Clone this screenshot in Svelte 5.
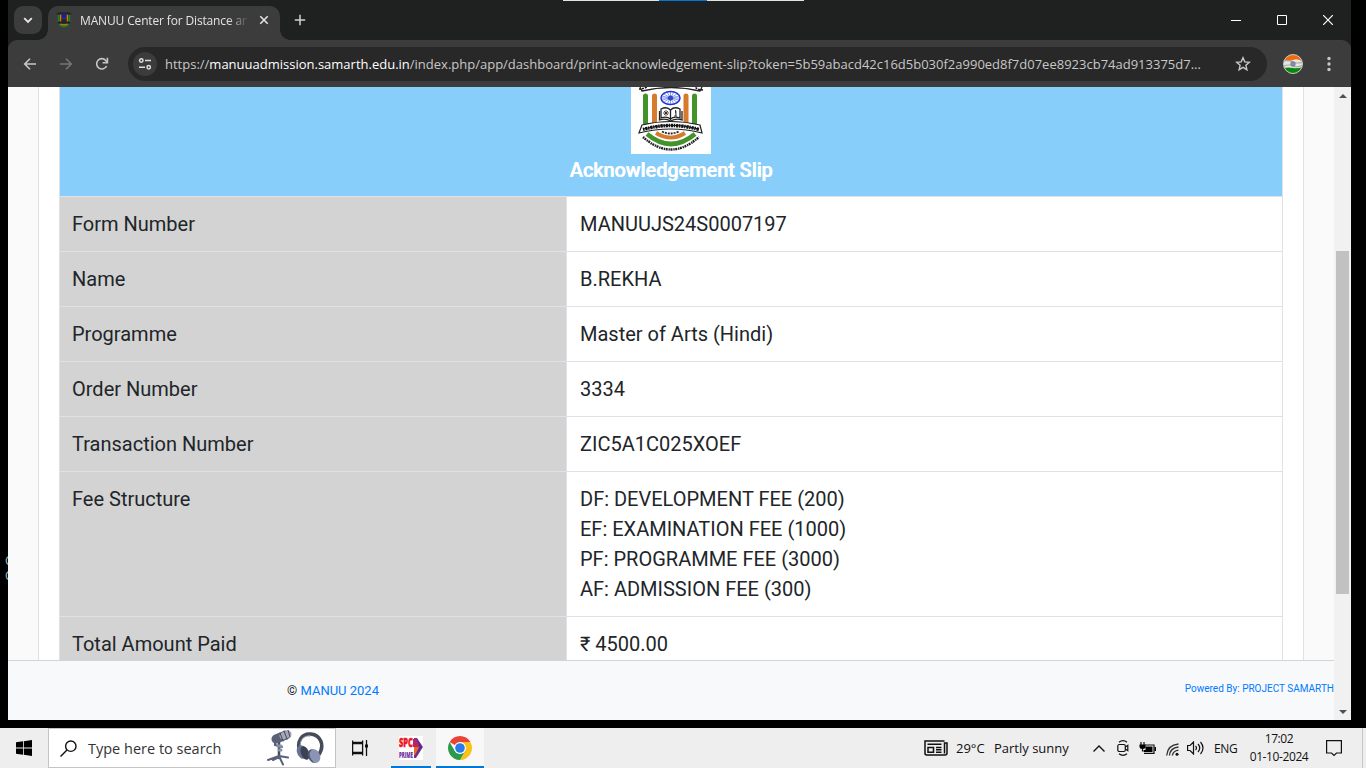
<script>
  const rows = [
    ['Form Number', ['MANUUJS24S0007197']],
    ['Name', ['B.REKHA']],
    ['Programme', ['Master of Arts (Hindi)']],
    ['Order Number', ['3334']],
    ['Transaction Number', ['ZIC5A1C025XOEF']],
    ['Fee Structure', [
      'DF: DEVELOPMENT FEE (200)',
      'EF: EXAMINATION FEE (1000)',
      'PF: PROGRAMME FEE (3000)',
      'AF: ADMISSION FEE (300)'
    ]],
    ['Total Amount Paid', ['₹ 4500.00']]
  ];
</script>

<div class="screen">
  <div class="behind"><span>C</span><span>C</span></div>
  <div class="window">
    <div class="topline"><i></i></div>
    <div class="tabs">
      <div class="tabmenu">
        <svg width="12" height="12" viewBox="0 0 12 12"><path d="M2.2 4.2 6 8l3.8-3.8" fill="none" stroke="#e8e8e8" stroke-width="1.8" /></svg>
      </div>
      <div class="tab">
        <svg class="fav" width="16" height="16" viewBox="0 0 16 16">
          <path d="M1 2q7-2.500 14 0" fill="none" stroke="#272727" stroke-width="2" />
          <path d="M2.500 3v7M13.500 3v7" stroke="#128a12" stroke-width="1.500" />
          <path d="M4.500 3v7M11.500 3v7" stroke="#d8761c" stroke-width="1.300" />
          <path d="M6 2h4v4H6z" fill="#1b1ba8" /><path d="M5.500 7h5v3h-5z" fill="#292929" />
          <path d="M2 10.500h12" stroke="#222" stroke-width="2" />
          <path d="M4.500 12q3.500 2 7 0" fill="none" stroke="#e27b22" stroke-width="1.400" />
          <path d="M3 12.500q5 4 10 0" fill="none" stroke="#138a18" stroke-width="1.600" />
        </svg>
        <span class="title">MANUU Center for Distance and Online</span>
        <svg class="x" width="10" height="10" viewBox="0 0 10 10"><path d="m1.300 1.300 7.400 7.400m0-7.400L1.300 8.700" stroke="#e3e3e3" stroke-width="1.600" /></svg>
      </div>
      <svg class="plus" width="12" height="12" viewBox="0 0 12 12"><path d="M6 .8v10.400M.8 6h10.400" stroke="#d0d0d0" stroke-width="1.500" /></svg>
      <div class="controls">
        <svg width="10" height="10" viewBox="0 0 10 10"><path d="M0 5.500h10" stroke="#fff" /></svg>
        <svg width="10" height="10" viewBox="0 0 10 10"><path d="M.5.5h9v9h-9z" fill="none" stroke="#fff" /></svg>
        <svg width="10" height="10" viewBox="0 0 10 10"><path d="m0 0 10 10M10 0 0 10" stroke="#fff" stroke-width="1.200" /></svg>
      </div>
    </div>

    <div class="toolbar">
      <svg class="nav" width="16" height="16" viewBox="0 0 16 16"><path d="M14 8H3M8 2.700 2.700 8 8 13.300" fill="none" stroke="#c7c7c7" stroke-width="1.600" /></svg>
      <svg class="nav" width="16" height="16" viewBox="0 0 16 16"><path d="M2 8h11M8 2.700 13.300 8 8 13.300" fill="none" stroke="#757575" stroke-width="1.600" /></svg>
      <svg class="nav" width="16" height="16" viewBox="0 0 16 16"><path d="M12.600 10A5.200 5.200 0 1 1 12 4.700L13 6" fill="none" stroke="#c7c7c7" stroke-width="1.600" /><path d="M13.400 1.800v4.900H8.600" fill="none" stroke="#c7c7c7" stroke-width="1.600" /></svg>
      <div class="omni">
        <div class="site">
          <svg width="14" height="14" viewBox="0 0 14 14" fill="none" stroke="#dedede" stroke-width="1.500"><circle cx="3.300" cy="3.500" r="1.700" /><path d="M7 3.500h6M1 10.300h6" /><circle cx="10.700" cy="10.300" r="1.700" /></svg>
        </div>
        <div class="url"><span class="scheme">https://</span><b>manuuadmission.samarth.edu.in</b><span class="path">/index.php/app/dashboard/print-acknowledgement-slip?token=5b59abacd42c16d5b030f2a990ed8f7d07ee8923cb74ad913375d7...</span></div>
        <svg class="star" width="16" height="16" viewBox="0 0 16 16"><path d="m8 1.800 1.800 4.100 4.500.4-3.400 3 1 4.400L8 11.400l-3.900 2.300 1-4.400-3.400-3 4.500-.4z" fill="none" stroke="#c7c7c7" stroke-width="1.400" /></svg>
      </div>
      <svg class="avatar" width="20" height="20" viewBox="0 0 20 20">
        <defs><clipPath id="flagclip"><circle cx="10" cy="10" r="9.300" /></clipPath></defs>
        <g clip-path="url(#flagclip)">
          <path d="M0 0h20v20H0z" fill="#e5e5e2" /><path d="M0 0h20v8Q15 4 10 6T0 6z" fill="#f26a0b" />
          <path d="M0 14q6-1 10 0t10-1v7H0z" fill="#07870c" />
          <path d="M0 7q6-1 10 1t10 0M1 12q5-2 9 0t10-1" fill="none" stroke="#a9a9a4" stroke-width="1.200" />
          <circle cx="10" cy="10" r="2.300" fill="#8b90b2" stroke="#59618f" stroke-width=".6" />
        </g><circle cx="10" cy="10" r="9.500" fill="none" stroke="#c7c7c7" />
      </svg>
      <svg class="kebab" width="4" height="16" viewBox="0 0 4 16" fill="#c7c7c7"><circle cx="2" cy="2.500" r="1.700" /><circle cx="2" cy="8" r="1.700" /><circle cx="2" cy="13.500" r="1.700" /></svg>
    </div>

    <div class="viewport">
      <div class="page">
        <div class="content">
          <div class="card">
            <div class="sheet">
              <div class="banner">
                <svg width="80" height="67" viewBox="0 0 80 67">
                  <path d="M0 0h80v67H0z" fill="#fff" />
                  <path d="M9 0l2 4Q40-3 69 4l2-4" fill="none" stroke="#222" stroke-width="1.300" />
                  <path d="M8 2q4 0 8-2M72 3q-5 0-8-3" fill="none" stroke="#111" stroke-width="1.500" stroke-dasharray="2 1" />
                  <path d="M14.500 9v27M63.500 9v27" stroke="#429329" stroke-width="5" stroke-linecap="round" />
                  <path d="M23.500 9v26M55 9v26" stroke="#d67a2d" stroke-width="5" stroke-linecap="round" />
                  <ellipse cx="39.500" cy="11" rx="9.500" ry="6.500" fill="#fff" stroke="#1a32d8" stroke-width="1.500" />
                  <path d="M30.500 11h18M39.500 5v12M33 7l13 8M46 7l-13 8M36 5l7 12M43 5l-7 12M31 9l17 4M48 9l-17 4" stroke="#3c57e4" stroke-width=".6" />
                  <circle cx="39.500" cy="11" r="2.500" fill="#3048c4" />
                  <path d="M30 22q6-3 9.500 1 4-4 9.500-1v9q-6-2-9.500 1-4-3-9.500-1z" fill="#fff" stroke="#222" stroke-width="1.300" />
                  <path d="M39.500 23v10M28.500 24v9q6-2 11 1 6-3 11.500-1v-9" fill="none" stroke="#222" stroke-width="1.300" />
                  <path d="M32 26h6M35 23v6M33 24l4 4M37 24l-4 4M44 23l1 1v5M43 29h3" stroke="#222" stroke-width=".8" />
                  <path d="M16 47q24 20 48 0" fill="none" stroke="#429329" stroke-width="4.600" />
                  <path d="M25 46q15 9 29 0" fill="none" stroke="#d67a2d" stroke-width="4" />
                  <path d="M29 44q11 5 20 0" fill="none" stroke="#fff" stroke-width="3.500" />
                  <path d="M31 44.500q8 4 17 0" fill="none" stroke="#222" stroke-width="1.800" stroke-dasharray="2 1" />
                  <path d="M11 38q28-7 58 0l2 8q-31-8-63 0z" fill="#fff" stroke="#222" stroke-width="1.200" />
                  <path d="M12 42.500q28-8 56 0" fill="none" stroke="#111" stroke-width="3.500" stroke-dasharray="1.400 .8 2.300 .7" />
                  <path d="M12 42q28-7.500 56 0" fill="none" stroke="#111" stroke-width="1" />
                  <path d="M12 50q28 25 56 0" fill="none" stroke="#222" stroke-width="2.400" stroke-dasharray="1.400 .6 2 .8" />
                </svg>
                <h1>Acknowledgement Slip</h1>
              </div>
              {#each rows as [label, lines]}
                <div class="row">
                  <div class="label">{label}</div>
                  <div class="value">{#each lines as line}<div>{line}</div>{/each}</div>
                </div>
              {/each}
            </div>
          </div>
        </div>
        <footer>
          <div class="copy">© <a href="#top">MANUU 2024</a></div>
          <a class="power" href="#top">Powered By: PROJECT SAMARTH</a>
        </footer>
      </div>
      <div class="scroll">
        <svg width="8" height="4" viewBox="0 0 8 4"><path d="m0 4 4-4 4 4z" fill="#505050" /></svg>
        <div class="thumb"></div>
        <svg class="down" width="8" height="4" viewBox="0 0 8 4"><path d="m0 0 4 4 4-4z" fill="#505050" /></svg>
      </div>
    </div>
  </div>

  <div class="taskbar">
    <div class="start"><svg width="16" height="16" viewBox="0 0 16 16"><path d="M0 2.300 7 1.300V7.600H0zM7.800 1.200 16 0v7.600H7.800zM0 8.400h7v6.300l-7-1zM7.800 8.400H16V16l-8.200-1.200z" /></svg></div>
    <div class="search">
      <svg class="lens" width="17" height="17" viewBox="0 0 17 17"><circle cx="10.800" cy="6.200" r="5.200" fill="none" stroke="#111" stroke-width="1.400" /><path d="m7 10-6.500 6.500" stroke="#111" stroke-width="1.400" /></svg>
      <span>Type here to search</span>
      <svg class="art" width="58" height="37" viewBox="0 0 58 37">
        <g stroke-linecap="round" fill="none">
          <path d="M13 12v16" stroke="#474d61" stroke-width="2.500" />
          <path d="m13 26-11 4M13 26l9 1.500M13 26l4 8.500M13 27l-6 3" stroke="#59617b" stroke-width="2" />
          <path d="M9 9v6l7 2" stroke="#586079" stroke-width="2" />
          <path d="m10 9 10-4" stroke="#596078" stroke-width="9" />
          <path d="m17 6 5-2" stroke="#a5a9b5" stroke-width="7" />
          <path d="m14 3 3 8M18 1l3 8M22 0l2 7" stroke="#42485c" stroke-width="1" />
          <path d="M12 16h3M13 20h2" stroke="#8990aa" stroke-width="3" />
          <path d="M34 23C30 11 36 3 45 4s15 11 7 22" stroke="#454b5a" stroke-width="3.500" />
          <path d="M35 20C32 11 37 5 44 6" stroke="#9299ac" stroke-width="1" />
        </g>
        <ellipse cx="36" cy="22" rx="5" ry="7" transform="rotate(-22 36 22)" fill="#687391" />
        <ellipse cx="39" cy="23" rx="4" ry="7" transform="rotate(-22 39 23)" fill="#3c4254" />
        <ellipse cx="47" cy="26" rx="5" ry="7" transform="rotate(-22 47 26)" fill="#4d566c" />
        <ellipse cx="49" cy="26" rx="5" ry="7" transform="rotate(-22 49 26)" fill="#8a94b4" />
      </svg>
    </div>
    <svg class="view" width="17" height="16" viewBox="0 0 17 16" fill="none" stroke="#111" stroke-width="1.300"><path d="M.6 3.600h10v8.800H.6zM.6.500v2h10v-2M.6 15.500v-2h10v2M14.500 0v16" /><path d="M13 4.500h3v3h-3z" fill="#111" stroke="none" /></svg>
    <div class="app spc"><svg width="24" height="24" viewBox="0 0 24 24">
      <path d="M0 0h24v24H0z" fill="#fff" />
      <path d="M15 2h3l6 9-7 11h-2z" fill="#74308e" /><path d="M14 3h3l3 8h-6z" fill="#b72661" /><path d="M15 11h5l-4 8h-1z" fill="#ef662d" /><path d="m18 3 4 8-4 8 3-8z" fill="#402070" />
      <text x="0" y="11" textLength="14" lengthAdjust="spacingAndGlyphs" font-size="12" font-weight="900" fill="#ed171f" stroke="#ed171f" stroke-width=".5">SPC</text>
      <text x="0" y="22" textLength="14" lengthAdjust="spacingAndGlyphs" font-size="9" font-weight="800" fill="#6f319b">PRIME</text>
    </svg></div>
    <div class="app chrome"><svg width="24" height="24" viewBox="0 0 24 24">
      <path d="M12 12 1.610 6A12 12 0 0 1 22.390 6z" fill="#ea4335" />
      <path d="M12 6h10.390A12 12 0 0 1 12 24l5.200-9z" fill="#fbc116" />
      <path d="M12 24A12 12 0 0 1 1.610 6l5.200 9L12 18l5.200-3z" fill="#2b9b4a" />
      <circle cx="12" cy="12" r="6" fill="#fff" /><circle cx="12" cy="12" r="4.800" fill="#287be8" />
    </svg></div>
    <div class="tray">
      <svg class="news" width="24" height="16" viewBox="0 0 24 16" fill="none" stroke="#111" stroke-width="1.500"><path d="M20.500 1H1v12.500q0 1.500 2 1.500h18q2 0 2-2V3h-2.500v10.500" /><path d="M3.500 4.300h14M12 7.500h5.500M12 9.800h5.500M12 12.200h5.500M4 7.400h5.500v4.800H4z" /></svg>
      <span class="temp">29°C</span><span class="sunny">Partly sunny</span>
      <svg class="up" width="12" height="7" viewBox="0 0 12 7"><path d="m.5 6.500 5.500-5.500 5.500 5.500" fill="none" stroke="#111" stroke-width="1.400" /></svg>
      <svg class="meet" width="12" height="16" viewBox="0 0 12 16" fill="none" stroke="#111" stroke-width="1.200"><path d="M2 2.200q4-3 8 0M2 13.800q4 3 8 0" /><rect x=".8" y="4.500" width="7.500" height="7" rx="1.500" /><path d="m8.300 7 2.500-1.700v5.400L8.300 9" /></svg>
      <svg class="bat" width="17" height="12" viewBox="0 0 17 12"><path d="M2 0v3M5 0v3M3.500 6v3H6M6 3h9v8.300H5" fill="none" stroke="#111" stroke-width="1.200" /><path d="M.5 2.500h6v2q0 2.500-3 2.500t-3-2.500zM6.500 4.500h7V10H5V8h1.500zM15.500 5H17v4h-1.500z" /></svg>
      <svg class="wifi" width="13" height="13" viewBox="0 0 13 13" fill="none" stroke="#333" stroke-width="1.300"><path d="M.7 12.500Q1.500 2 12.500 1M3.500 12.500Q4 5 12.500 4M6.400 12.500Q7 8 12.500 7.200" /><circle cx="11" cy="11.200" r="1.500" fill="#111" stroke="none" /></svg>
      <svg class="vol" width="17" height="14" viewBox="0 0 17 14" fill="none" stroke="#111" stroke-width="1.200"><path d="M.6 4.500h2.500L6.500 1v12L3.100 9.500H.6zM8.500 5q2 2 0 4M11 3q3.500 4 0 8M13.500 1q5 6 0 12" /></svg>
      <span class="eng">ENG</span>
      <div class="clock"><span>17:02</span><span class="date">01-10-2024</span></div>
      <div class="notify"><svg width="16" height="17" viewBox="0 0 16 17"><path d="M.6.600h14.800v12.400H10.500L8 15.400 5.500 13H.6z" fill="none" stroke="#111" stroke-width="1.200" /></svg></div>
      <div class="peek"></div>
    </div>
  </div>
</div>

<style>
  :global(body) { background: #000; overflow: hidden; }
  * { box-sizing: border-box; }
  svg { display: block; flex: none; }
  .screen { width: 1366px; height: 768px; background: #000; position: relative; display: flex; flex-direction: column; justify-content: space-between; overflow: hidden; font-family: "Open Sans", sans-serif; }
  .behind { position: absolute; left: 5px; top: 553px; display: flex; flex-direction: column; color: #9fc4d0; font-size: 12px; line-height: 15px; }
  .window { width: 1343px; height: 720px; margin-left: 8px; position: relative; background: #1f2120; display: flex; flex-direction: column; }
  .topline { position: absolute; left: 555px; top: 0; width: 241px; height: 1px; background: #e2e2df; }
  .topline i { display: block; width: 48px; height: 1px; margin-left: 96px; background: #0078d7; }
  .tabs { height: 40px; display: flex; padding-left: 6px; flex: none; }
  .tabmenu { width: 28px; height: 28px; border-radius: 9px; background: #3c3c3c; margin-top: 6px; display: grid; place-items: center; }
  .tab { position: relative; width: 232px; height: 34px; margin: 6px 0 0 6px; border-radius: 10px 10px 0 0; background: #3c3c3c; display: flex; padding: 6px 11px 0 8px; }
  .tab::before, .tab::after { content: ""; position: absolute; bottom: 0; width: 10px; height: 10px; }
  .tab::before { left: -10px; background: radial-gradient(circle at 0 0, transparent 9.500px, #3c3c3c 10px); }
  .tab::after { right: -10px; background: radial-gradient(circle at 100% 0, transparent 9.500px, #3c3c3c 10px); }
  .title { width: 167px; margin-left: 8px; overflow: hidden; white-space: nowrap; font-size: 12px; line-height: 17px; letter-spacing: -.15px; color: #e3e3e3; mask-image: linear-gradient(90deg, #000 148px, transparent 169px); }
  .x { margin: 3px 0 0 12px; }
  .plus { margin: 14px 0 0 14px; }
  .controls { margin: 15px 18px 0 auto; display: flex; gap: 36px; }
  .toolbar { height: 47px; flex: none; background: #3c3c3c; border-radius: 9px 9px 0 0; display: flex; align-items: center; padding-left: 14px; }
  .nav { margin-right: 20px; }
  .omni { width: 1139px; height: 34px; margin-left: -2px; border-radius: 17px; background: #282828; display: flex; align-items: center; padding-left: 5px; }
  .site { width: 24px; height: 24px; border-radius: 50%; background: #3c3c3c; display: grid; place-items: center; flex: none; }
  .url { width: 1056px; margin-left: 8px; display: flex; white-space: nowrap; font-size: 13px; line-height: 20px; color: #c7c7c7; }
  .url b { font-weight: 400; color: #fff; }
  .star { margin-left: 14px; }
  .avatar { margin-left: 16px; }
  .kebab { margin-left: 24px; }
  .viewport { display: flex; height: 633px; }
  .page { width: 1326px; display: flex; flex-direction: column; background: #fafafa; }
  .content { height: 573px; overflow: hidden; padding: 0 30px; }
  .card { border: solid #dee2e6; border-width: 0 1px; background: #fff; padding: 0 20px; height: 573px; }
  .sheet { border: solid #dee2e6; border-width: 0 1px; font-family: Roboto, sans-serif; color: #212529; }
  .banner { height: 109px; background: #87cefa; display: flex; flex-direction: column; align-items: center; }
  h1 { margin: 4px 0 0; font-size: 20px; line-height: 24px; color: #fff; font-weight: 500; letter-spacing: -.1px; text-shadow: .5px 0 #fff; }
  .row { display: flex; border-top: 1px solid #dee2e6; font-size: 20px; line-height: 30px; }
  .label { width: 507px; padding: 12px; background: #d3d3d3; border-right: 1px solid #dee2e6; }
  .value { padding: 12px 12px 12px 13px; }
  footer { height: 60px; border-top: 1px solid #d2d5d8; background: #f8f9fa; display: flex; justify-content: space-between; font-family: Roboto, sans-serif; color: #212529; }
  footer a { color: #007bff; text-decoration: none; }
  .copy { margin: 20px 0 0 279px; font-size: 13px; line-height: 20px; }
  .power { margin-top: 20px; font-size: 10px; line-height: 15px; white-space: nowrap; }
  .scroll { width: 17px; background: #f1f1f1; display: flex; flex-direction: column; align-items: center; padding: 7px 0 6px; }
  .thumb { width: 13px; height: 343px; margin-top: 153px; background: #c1c1c1; }
  .down { margin-top: auto; }
  .taskbar { height: 40px; background: #eee; display: flex; align-items: center; color: #111; }
  .start { width: 48px; display: grid; place-items: center; }
  .search { width: 288px; height: 40px; background: #fff; border: 1px solid #c4c4c4; display: flex; align-items: center; padding-left: 11px; font-size: 14.500px; color: #333; }
  .search span { margin-left: 11px; width: 128px; white-space: nowrap; }
  .art { margin-left: 50px; }
  .view { margin-left: 16px; }
  .app { height: 40px; border-bottom: 2px solid #0078d7; display: flex; justify-content: center; padding-top: 8px; }
  .spc { width: 40px; margin-left: 22px; font-family: "Open Sans", sans-serif; }
  .chrome { width: 48px; margin-left: 5px; background: #f8f8f8; }
  .tray { flex: 1; display: flex; align-items: center; font-size: 13px; white-space: nowrap; height: 40px; }
  .news { margin-left: 440px; }
  .temp { margin-left: 8px; width: 29px; }
  .sunny { margin-left: 9px; width: 75px; }
  .up { margin-left: 24px; }
  .meet { margin-left: 12px; }
  .bat { margin-left: 10px; }
  .wifi { margin: 3px 0 0 10px; }
  .vol { margin-left: 8px; }
  .eng { margin-left: 10px; width: 23px; font-size: 12px; letter-spacing: -.4px; }
  .clock { width: 60px; margin-left: 12px; display: flex; flex-direction: column; align-items: center; font-size: 12px; line-height: 18px; letter-spacing: -.4px; }
  .notify { margin-left: 17px; }
  .peek { width: 1px; height: 40px; margin-left: 20px; background: #c8c8c8; }
</style>
